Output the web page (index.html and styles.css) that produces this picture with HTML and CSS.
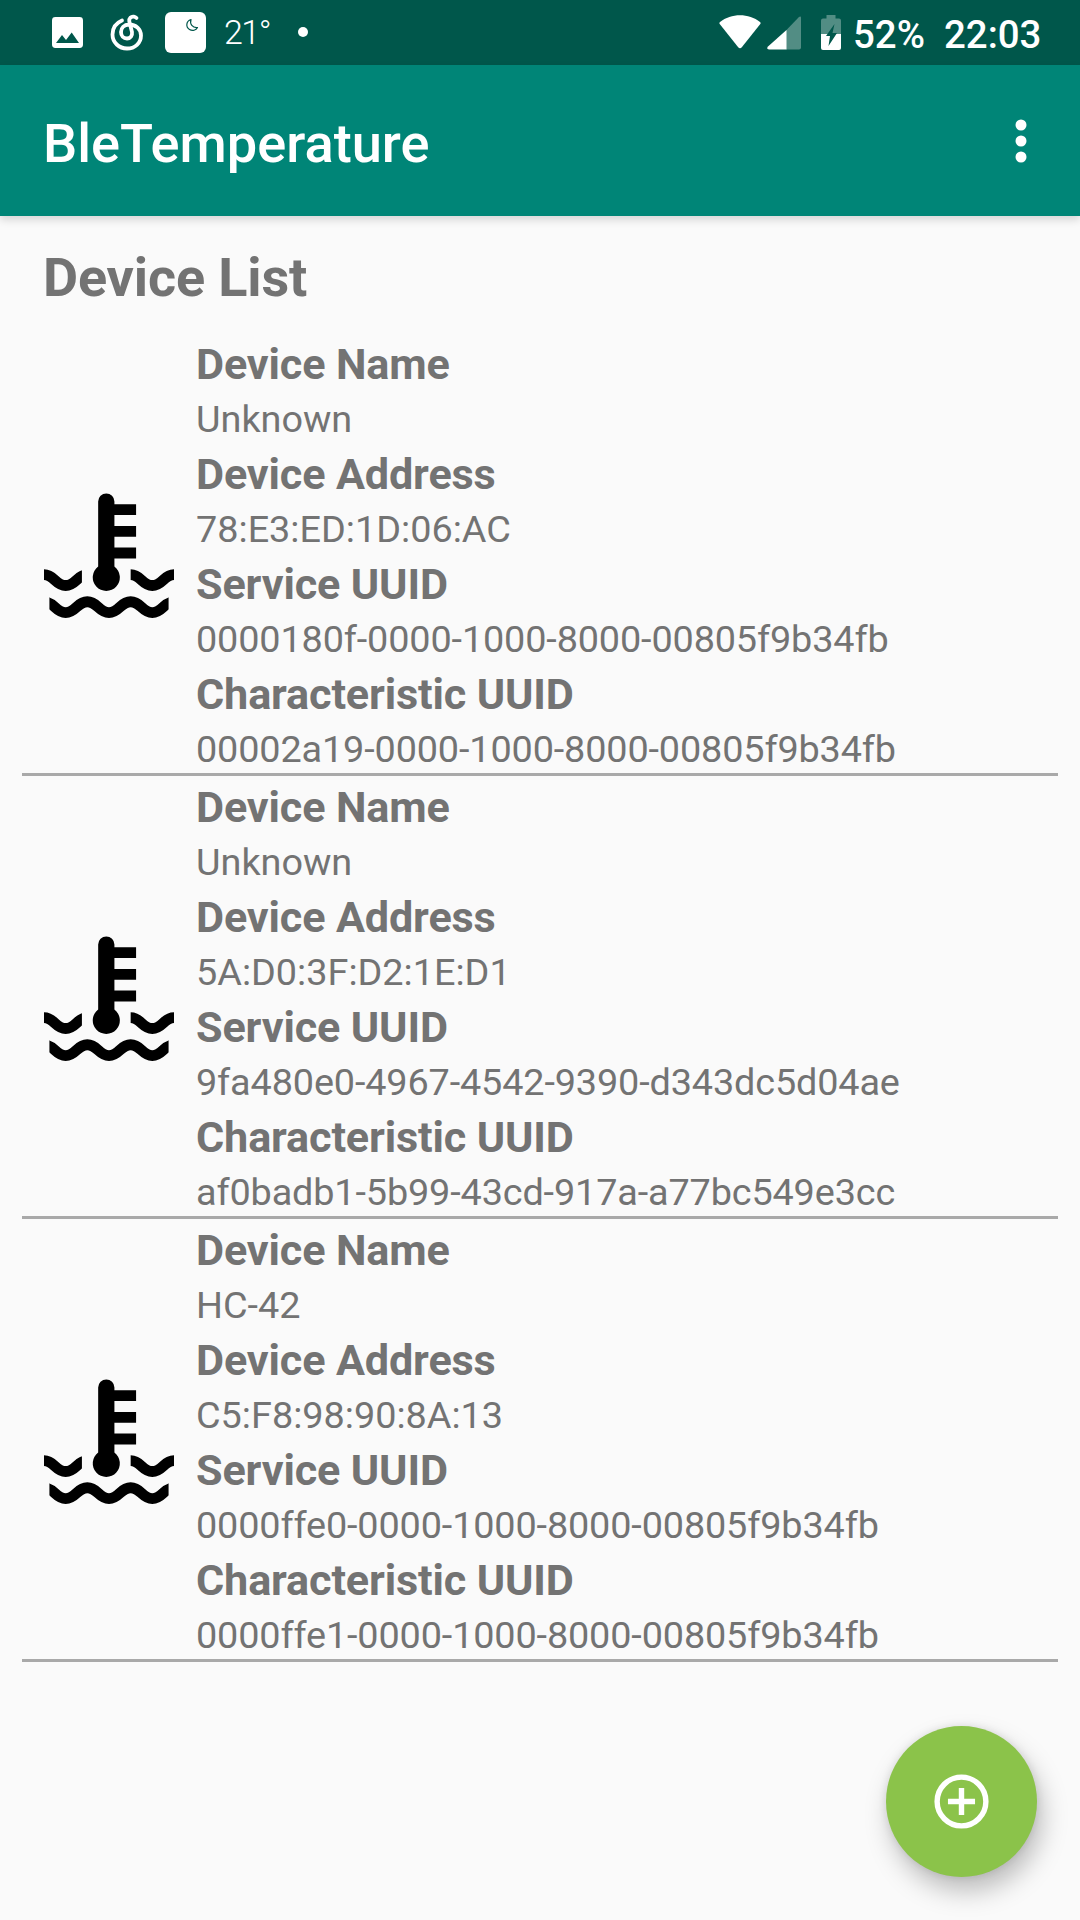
FILE: index.html
```html
<!DOCTYPE html>
<html lang="en">
<head>
<meta charset="utf-8">
<title>BleTemperature</title>
<link rel="stylesheet" href="styles.css">
</head>
<body>
<svg class="defs" width="0" height="0">
  <defs>
    <clipPath id="clip-top"><path d="M0 14h7v6H0zM16 14h8v6h-8z"/></clipPath>
    <clipPath id="clip-bottom"><path d="M1 19h22v6H1z"/></clipPath>
    <symbol id="coolant" viewBox="0 0 24 24">
      <path d="M10 2.5a1.5 1.5 0 0 1 3 0V3h4v2h-4v2h4v2h-4v2h4v2h-4v1.5a2.5 2.5 0 1 1-3 0z"/>
      <g fill="none" stroke="#000" stroke-width="2">
        <path clip-path="url(#clip-top)" d="M-.2 16H0c1.9 0 2.1 2 4 2s2.1-2 4-2s2.1 2 4 2s2.1-2 4-2s2.1 2 4 2s2.1-2 4-2h.2"/>
        <path clip-path="url(#clip-bottom)" d="M0 21c1.9 0 2.1 2 4 2s2.1-2 4-2s2.1 2 4 2s2.1-2 4-2s2.1 2 4 2s2.1-2 4-2"/>
      </g>
    </symbol>
  </defs>
</svg>
<div class="screen">
  <header class="status">
    <svg class="photo" width="31" height="31" viewBox="0 0 31 31"><path fill="#fff" fill-rule="evenodd" d="M3.4 0h24.2A3.4 3.4 0 0 1 31 3.4v24.2a3.4 3.4 0 0 1-3.4 3.4H3.4A3.4 3.4 0 0 1 0 27.600V3.400A3.4 3.4 0 0 1 3.400 0zM4 26h23l-7.300-10.500-5.700 7.500-4-5z"/></svg>
    <svg class="music" width="34" height="38" viewBox="0 0 34 38"><path fill="none" stroke="#fff" stroke-width="3.800" stroke-linecap="round" d="M12 6.500C6 9 2.500 14 2.500 20.500c0 8 6.500 14 14.500 14s14-5.500 14-13c0-6.500-5-11-12-11-5 0-8 3.500-8 7.500s2.500 6.500 6 6.500 5.500-3 5-6.500l-2.700-10.500c-.6-3.500 2-5.300 4.500-4.900 1.200.2 2 .7 2.700 1.400"/></svg>
    <svg class="weather" width="41" height="41" viewBox="0 0 41 41"><rect width="41" height="41" rx="6" fill="#fff"/><path fill="none" stroke="#00574b" stroke-width="1.200" stroke-linejoin="round" d="M26 7.500c-5 1.500-5.500 7.500-1.500 10 3 1.800 6.500.8 8-2-5 .5-8-3.500-6.500-8z"/></svg>
    <span class="degrees">21°</span>
    <span class="dot"></span>
    <svg class="wifi" width="42" height="34" viewBox="0 0 42 34"><path fill="#fff" d="M1 7C12-2 30-2 41 7q1 1 .3 2L23 32q-2 2.500-4 0L.7 9Q0 8 1 7z"/></svg>
    <svg class="signal" width="34" height="34" viewBox="0 0 34 34"><path fill="#fff" fill-opacity=".32" d="M19 14.500 31.500 1.500Q34-.5 34 2v29.500q0 2-2 2H19z"/><path fill="#fff" d="M19.500 14v19.500H2q-3-.5-1-3z"/></svg>
    <svg class="battery" width="20" height="35" viewBox="0 0 20 35"><path fill="#fff" fill-opacity=".32" d="M5.500 0h9v3.500H18q2 0 2 2V19H0V5.500q0-2 2-2h3.500z"/><path fill="#fff" d="M0 19h20v14q0 2-2 2H2q-2 0-2-2z"/><path fill="#00574b" d="M13.500 9 5 21h4L7.500 31 16 18h-4.500z"/></svg>
    <span class="percent">52%</span>
    <span class="clock">22:03</span>
  </header>
  <div class="toolbar">
    <h1>BleTemperature</h1>
    <svg width="12" height="44" viewBox="0 0 12 44" fill="#fff"><circle cx="6" cy="6" r="5.500"/><circle cx="6" cy="22" r="5.500"/><circle cx="6" cy="38" r="5.500"/></svg>
  </div>
  <main>
    <h2>Device List</h2>
    <ul class="devices">
      <li>
        <svg class="icon"><use href="#coolant"/></svg>
        <dl>
          <dt>Device Name</dt><dd>Unknown</dd>
          <dt>Device Address</dt><dd>78:E3:ED:1D:06:AC</dd>
          <dt>Service UUID</dt><dd class="uuid">0000180f-0000-1000-8000-00805f9b34fb</dd>
          <dt>Characteristic UUID</dt><dd class="uuid">00002a19-0000-1000-8000-00805f9b34fb</dd>
        </dl>
      </li>
      <li>
        <svg class="icon"><use href="#coolant"/></svg>
        <dl>
          <dt>Device Name</dt><dd>Unknown</dd>
          <dt>Device Address</dt><dd>5A:D0:3F:D2:1E:D1</dd>
          <dt>Service UUID</dt><dd class="uuid">9fa480e0-4967-4542-9390-d343dc5d04ae</dd>
          <dt>Characteristic UUID</dt><dd class="uuid">af0badb1-5b99-43cd-917a-a77bc549e3cc</dd>
        </dl>
      </li>
      <li>
        <svg class="icon"><use href="#coolant"/></svg>
        <dl>
          <dt>Device Name</dt><dd>HC-42</dd>
          <dt>Device Address</dt><dd>C5:F8:98:90:8A:13</dd>
          <dt>Service UUID</dt><dd class="uuid">0000ffe0-0000-1000-8000-00805f9b34fb</dd>
          <dt>Characteristic UUID</dt><dd class="uuid">0000ffe1-0000-1000-8000-00805f9b34fb</dd>
        </dl>
      </li>
    </ul>
  </main>
  <button class="fab" aria-label="Add device">
    <svg width="65" height="65" viewBox="0 0 24 24" fill="none" stroke="#fff" stroke-width="2"><circle cx="12" cy="12" r="9"/><path d="M12 7v10M7 12h10"/></svg>
  </button>
</div>
</body>
</html>
```
FILE: styles.css
```css
* { box-sizing: border-box; }
body, h1, h2, ul, dl, dd { margin: 0; padding: 0; }
body { font-family: Roboto, sans-serif; background: #fafafa; color: #737373; }
svg { display: block; flex: none; }
.defs { position: absolute; }
.screen { position: relative; width: 1080px; height: 1920px; overflow: hidden; }

.status {
  display: flex;
  align-items: flex-start;
  height: 65px;
  padding-left: 52px;
  background: #00574b;
  color: #fff;
}
.photo { margin-top: 17px; }
.music { margin: 14px 0 0 27px; }
.weather { margin: 12px 0 0 21px; }
.degrees { width: 54px; margin: 12px 0 0 18px; font-size: 34px; font-weight: 300; line-height: 40px; letter-spacing: -1.5px; white-space: nowrap; }
.dot { width: 10px; height: 10px; margin: 27px 0 0 20px; border-radius: 50%; background: #fff; }
.wifi { margin: 15px 0 0 411px; }
.signal { margin: 16px 0 0 6px; }
.battery { margin: 15px 0 0 20px; }
.percent, .clock { margin-top: 12px; font-size: 38.4px; font-weight: 500; line-height: 45px; white-space: nowrap; }
.percent { width: 91px; margin-left: 12px; }

.toolbar {
  display: flex;
  align-items: center;
  justify-content: space-between;
  height: 151px;
  padding: 0 53px 0 43px;
  background: #008577;
  color: #fff;
  box-shadow: 0 4px 8px rgba(0, 0, 0, .14);
}
h1 { padding-top: 6px; font-size: 54.2px; font-weight: 500; line-height: 64px; }

main { padding: 0 22px; }
h2 { height: 117px; padding: 30px 0 0 21px; font-size: 54px; font-weight: 700; line-height: 64px; letter-spacing: -.15px; }
.devices { list-style: none; }
.devices li {
  display: flex;
  align-items: center;
  gap: 22px;
  height: 443px;
  padding-left: 22px;
  border-bottom: 3px solid #a9a9a9;
}
.icon { width: 130px; height: 130px; }
dl { height: 440px; padding-top: 2px; white-space: nowrap; }
dt { height: 59px; font-size: 43.2px; font-weight: 700; line-height: 59px; letter-spacing: -.15px; }
dd { height: 51px; font-size: 37.8px; font-weight: 400; line-height: 51px; }
.uuid { letter-spacing: -.13px; }

.fab {
  position: absolute;
  left: 886px;
  top: 1726px;
  display: flex;
  align-items: center;
  justify-content: center;
  width: 151px;
  height: 151px;
  padding: 0;
  border: 0;
  border-radius: 50%;
  background: #8bc34a;
  box-shadow: 5px 14px 26px rgba(0, 0, 0, .25), 0 0 8px rgba(0, 0, 0, .1);
}
```
